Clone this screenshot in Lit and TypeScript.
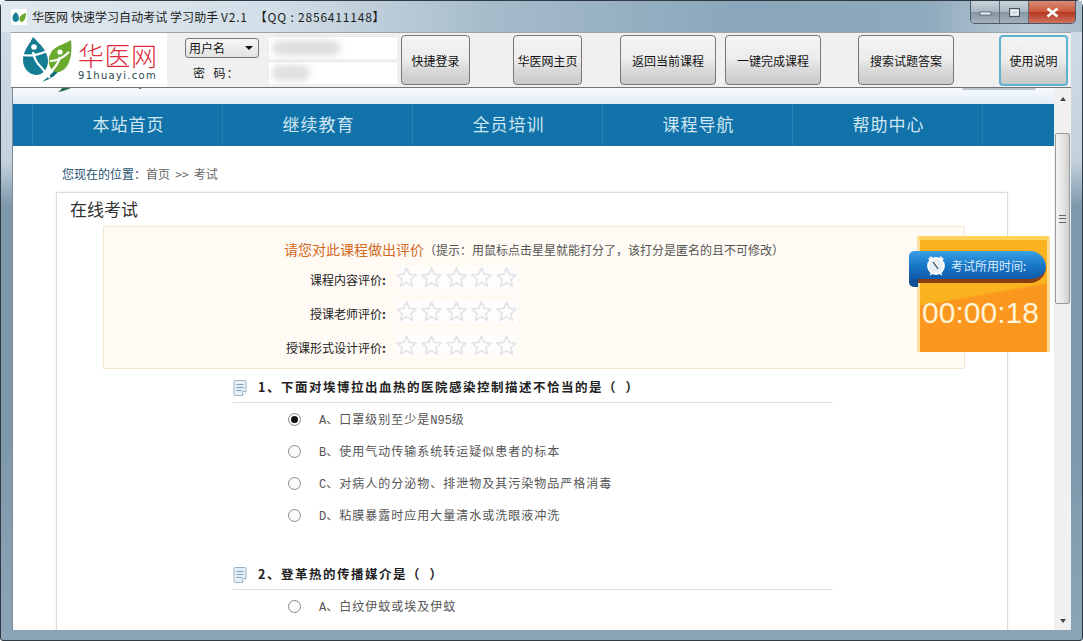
import { LitElement, html, css, svg } from "lit";
import { customElement } from "lit/decorators.js";

const star = svg`<svg class="star" viewBox="0 0 24 24" width="23" height="23"><path d="M12 2.200l2.900 6.600 7 .7-5.300 4.700 1.600 7-6.200-3.700-6.200 3.700 1.600-7L2.100 9.500l7-.7z" fill="#fdfdfd" stroke="#e2e4e7" stroke-width="1.800" stroke-linejoin="round"/></svg>`;
const docIcon = svg`<svg class="doc" viewBox="0 0 14 16" width="14" height="16"><path d="M1 1.500Q1 .5 2 .5h10q1 0 1 1v10l-3.500 4H2q-1 0-1-1z" fill="#e6eff6" stroke="#9db6ca"/><path d="M3.500 4.500h7M3.500 7.500h7M3.500 10.500h5" stroke="#7f9fb8"/><path d="M9.500 15.500v-4h3.500" fill="#fff" stroke="#9db6ca"/></svg>`;

const questions = [
  { title: "1、下面对埃博拉出血热的医院感染控制描述不恰当的是（  ）", opts: [
    ["A", "口罩级别至少是", "N95", "级", true], ["B", "使用气动传输系统转运疑似患者的标本", "", "", false],
    ["C", "对病人的分泌物、排泄物及其污染物品严格消毒", "", "", false], ["D", "粘膜暴露时应用大量清水或洗眼液冲洗", "", "", false] ] },
  { title: "2、登革热的传播媒介是（  ）", opts: [["A", "白纹伊蚊或埃及伊蚊", "", "", false]] },
];

@customElement("app-root")
export class AppRoot extends LitElement {
  static styles = css`
    :host { display: block; width: 1083px; height: 641px; overflow: hidden; background: #fff;
      font-family: "Noto Sans CJK SC", "Liberation Sans", sans-serif; color: #222; }
    .window { box-sizing: border-box; width: 1083px; height: 641px; display: flex; flex-direction: column;
      padding: 0 11px 10px 11px; border: 1px solid #2f3a42; border-radius: 7px 7px 3px 3px; margin: 0;
      background: linear-gradient(180deg, #d3dee7 0, #c3d2dd 25%, #7f99ac 32%, #7f99ac 70%, #8ba4b6 100%);
      position: relative; }
    .titlebar { height: 31px; flex: none; display: flex; align-items: center; margin: 0 -11px 0 -11px; padding-left: 10px;
      background: linear-gradient(90deg, #dfe8ef 0, #d3dfe8 25%, #a6bccb 45%, #8aa7bb 68%, #8da9bc 85%, #b9c9d5 95%, #aabdcb 100%); }
    .appicon { margin-right: 5px; flex: none; }
    .apptitle { font-size: 12px; color: #1c1c1c; white-space: pre; flex: 1; letter-spacing: .05px; }
    .apptitle span { letter-spacing: .8px; }
    .controls { align-self: flex-start; display: flex; height: 22px; margin-right: 6px; border: 1px solid #4a5a66; border-top: 0; border-radius: 0 0 5px 5px; overflow: hidden; }
    .ctl { display: flex; align-items: center; justify-content: center; height: 100%; width: 28px;
      background: linear-gradient(180deg, #c9d3da 0, #a8b6c1 50%, #8495a2 51%, #a5b2bc 100%); border-right: 1px solid #5f6e79; }
    .ctl.close { width: 46px; border-right: 0; background: linear-gradient(180deg, #d98a74 0, #c9573c 50%, #b5371f 51%, #cf7360 100%); color: #fff; }
    .toolbar { height: 56px; flex: none; box-sizing: border-box; display: flex; align-items: center; background: #f0f0f0; margin-left: -1px;
      border-bottom: 1px solid #6f7479; border-top: 1px solid #9aa7b0; }
    .logo { width: 156px; height: 100%; flex: none; background: #fff; display: flex; align-items: center; padding-left: 11px; box-sizing: border-box; }
    .logo svg { flex: none; }
    .brand { display: flex; flex-direction: column; align-items: flex-start; margin-left: 0; margin-top: 2px; }
    .brandcn { font-size: 26px; line-height: 30px; color: #dc2a3a; letter-spacing: .5px; font-weight: 300; }
    .branden { font-family: "DejaVu Sans", sans-serif; font-size: 10px; line-height: 12px; letter-spacing: 1.300px; color: #2a4a50; white-space: nowrap; }
    .login { margin-left: 18px; width: 77px; flex: none; display: flex; flex-direction: column; gap: 3px; font-size: 12px; }
    .select { box-sizing: border-box; width: 74px; height: 20px; border: 1px solid #777; border-radius: 3px; display: flex; align-items: center; justify-content: space-between;
      padding: 0 5px 0 3px; background: linear-gradient(180deg, #f7f7f7, #e2e2e2); color: #111; }
    .caret { width: 0; height: 0; border: 4px solid transparent; border-top: 4px solid #111; border-bottom: 0; }
    .pwlabel { padding: 2px 0 0 8px; letter-spacing: 1px; white-space: pre; height: 20px; line-height: 20px; }
    .inputs { margin-left: 7px; width: 128px; flex: none; display: flex; flex-direction: column; gap: 2px; }
    .input { height: 23px; background: #fff; display: flex; align-items: center; padding-left: 3px; border-top: 1px solid #e8e8e8; box-sizing: border-box; }
    .blur { height: 16px; border-radius: 8px; background: #e0e0e0; filter: blur(3px); }
    .btn { box-sizing: border-box; flex: none; height: 50px; display: flex; align-items: center; justify-content: center; font-size: 12px; color: #111;
      border: 1px solid #777; border-radius: 4px; background: linear-gradient(180deg, #f4f4f4 0, #ececec 48%, #dadada 70%, #c9c9c9 100%); white-space: nowrap; }
    .btn.active { border: 2px solid #5fb3cf; height: 51px; }
    .pane { flex: 1; min-height: 0; display: flex; border-left: 1px solid #7b8a96; background: #fff; }
    .page { flex: 1; min-width: 0; overflow: hidden; position: relative; background: #fff; }
    .strip { height: 16px; overflow: hidden; background: linear-gradient(180deg, #f7fafd, #e2ecf6); position: relative; }
    .strip svg { position: absolute; left: 44px; top: 0; }
    .strip span { position: absolute; left: 85px; top: -12px; font-size: 11px; line-height: 15px; color: #555; font-family: "DejaVu Sans", sans-serif; letter-spacing: 1.100px; }
    .strip i { position: absolute; left: 949px; top: 0; width: 74px; height: 2px; background: #b9c6d2; border-radius: 0 0 3px 3px; }
    .nav { height: 42px; background: #1272aa; display: flex; padding-left: 19px; }
    .nav div { width: 190px; flex: none; box-sizing: border-box; border-left: 1px solid #2a80b3; color: #cfe6f3; font-size: 17px; line-height: 40px; text-align: center; letter-spacing: 1px; text-indent: 2px; }
    .crumb { margin: 19px 0 0 49px; height: 18px; line-height: 18px; font-size: 12px; color: #666; }
    .crumb b { font-weight: 400; color: #23506f; }
    .crumb span { margin: 0 2.500px; }
    .card { margin: 9px 0 0 43px; width: 952px; box-sizing: border-box; height: 460px; border: 1px solid #dcdcdc; border-bottom: 0; box-shadow: 0 0 2px #e8e8e8; }
    .cardtitle { height: 33px; line-height: 32px; padding-left: 13px; font-size: 17px; color: #333; }
    .rate { margin-left: 46px; width: 862px; height: 143px; box-sizing: border-box; background: #fffaf3; border: 1px solid #f3e6d2; padding-top: 12px; }
    .ratehead { height: 22px; line-height: 20px; padding-left: 180px; font-size: 14px; color: #d2691e; white-space: nowrap; }
    .ratehead small { font-size: 12px; color: #555; }
    .raterow { height: 34px; display: flex; align-items: center; }
    .rlabel { width: 285px; padding-top: 2px; text-align: right; font-size: 12px; color: #222; white-space: nowrap; }
    .rlabel i { display: inline-block; width: 7px; text-align: left; font-style: normal; font-weight: 700; }
    .stars { display: flex; margin: 0 0 2px 6px; gap: 2px; background: #fffdfb; }
    .star { display: block; }
    .q { margin-left: 176px; width: 600px; }
    .qhead { height: 30px; display: flex; align-items: center; border-bottom: 1px solid #ddd; box-sizing: border-box; margin-top: 4px; padding-bottom: 2px; font-size: 12.500px; font-weight: 700; letter-spacing: 1.500px; color: #222; white-space: pre; }
    .doc { margin: 2px 11px 0 0; flex: none; }
    .opt { height: 32px; display: flex; align-items: center; padding-left: 55px; font-size: 12px; letter-spacing: 1px; color: #555; white-space: pre; }
    .radio { width: 13px; height: 13px; box-sizing: border-box; border: 1px solid #888; border-radius: 50%; margin-right: 18px; background: #fbfbfb; display: flex; align-items: center; justify-content: center; flex: none; }
    .radio i { width: 7px; height: 7px; border-radius: 50%; background: #111; }
    .letter { font-family: "Liberation Mono", monospace; letter-spacing: 0; }
    .q + .q { margin-top: 29px; }
    .scroll { width: 17px; flex: none; background: #f0f0f0; display: flex; flex-direction: column; align-items: center; position: relative; }
    .arrow { height: 18px; flex: none; display: flex; align-items: center; justify-content: center; }
    .up { width: 0; height: 0; border: 3.500px solid transparent; border-bottom: 4px solid #444; border-top: 0; margin-top: 3px; }
    .down { width: 0; height: 0; border: 3.500px solid transparent; border-top: 4px solid #444; border-bottom: 0; }
    .thumb { box-sizing: border-box; margin-top: 27px; width: 15px; height: 171px; border: 1px solid #9a9a9a; border-radius: 2px; background: linear-gradient(90deg, #f3f3f3, #e4e4e4 55%, #cfcfcf); display: flex; align-items: center; justify-content: center; }
    .grip { width: 7px; height: 6px; border-top: 1px solid #666; border-bottom: 1px solid #666; position: relative; }
    .grip::after { content: ""; position: absolute; left: 0; right: 0; top: 2px; height: 1px; background: #666; }
    .spacer { flex: 1; }
    .timer { position: absolute; left: 904px; top: 148px; width: 133px; height: 116px; box-sizing: border-box; overflow: visible; border-radius: 3px 3px 0 0;
      background: linear-gradient(170deg, #fbb21f 0, #fbb21f 48%, #fb971f 50%, #fb971f 100%); border-left: 3px solid #fde0a0; border-right: 3px solid #fdd890; border-top: 4px solid #ffd35a; }
    .ribbon { position: absolute; left: -11px; top: 11px; width: 137px; height: 32px; box-sizing: border-box; border-radius: 6px 18px 18px 4px; display: flex; align-items: center; padding-left: 16px;
      background: linear-gradient(180deg, #3aa0e6 0, #1a78c8 50%, #0e5aa8 100%); border-bottom: 4px solid #8a3e12; color: #d8ecfa; font-size: 12px; white-space: nowrap; }
    .ribbon::before { content: ""; position: absolute; left: 0; bottom: -8px; width: 9px; height: 8px; background: #0e4f96; border-radius: 0 0 0 5px; }
    .clock { margin-right: 4px; flex: none; }
    .time { position: absolute; left: -6px; right: 0; top: 55px; text-align: center; font-family: "Liberation Sans", sans-serif; font-size: 30px; line-height: 36px; color: #fff4d6; }
  `;

  private rateRow(label: string) {
    return html`<div class="raterow"><div class="rlabel">${label}<i>:</i></div><div class="stars">${[0, 1, 2, 3, 4].map(() => star)}</div></div>`;
  }

  render() {
    return html`<div class="window">
      <div class="titlebar">
        <svg class="appicon" viewBox="0 0 16 16" width="16" height="16"><rect width="16" height="16" rx="2" fill="#fff"/><path d="M5 3Q1 6 1.500 9.500 2 13 5 13q3-1 3-4T5 3z" fill="#1d7f96"/><path d="M15 4q-5 1-6.500 5 0 4 2.500 4 4-2 4-9z" fill="#6aa82f"/></svg>
        <div class="apptitle">华医网 快速学习自动考试 学习助手 <span>V2.1  【QQ : 2856411148】</span></div>
        <div class="controls">
          <div class="ctl"><svg width="13" height="8"><rect x="1" y="4" width="11" height="3" fill="#eef2f4" stroke="#4a5a66" stroke-width=".8"/></svg></div>
          <div class="ctl"><svg width="13" height="11"><rect x="1.500" y="1.500" width="10" height="8" fill="#cdd7de" stroke="#45535e"/><rect x="3.500" y="3.500" width="6" height="4" fill="none" stroke="#eef2f4"/></svg></div>
          <div class="ctl close"><svg width="15" height="11"><path d="M2.500 1.500l10 8M12.500 1.500l-10 8" stroke="#fff" stroke-width="2.800"/></svg></div>
        </div>
      </div>
      <div class="toolbar">
        <div class="logo">
          <svg viewBox="0 0 56 48" width="56" height="48">
            <path d="M20 46Q34 42 42 28L38 27Q32 37 20 46z" fill="#0f6f78"/>
            <path d="M11 1C8 8 1 14 1 24 1 33 8 39 15 39 22 38 26 32 26 25 26 15 17 7 11 1z" fill="#147d93"/>
            <path d="M49 4C40 10 28 10 27 24 26 32 32 37 37 36 46 34 51 22 49 4z" fill="#69a92d"/>
            <path d="M1 19Q12 21 25 15M11 16Q13 26 19 31L28 42" stroke="#fff" stroke-width="2.200" fill="none"/>
            <path d="M28 25Q38 25 47 16M38 21Q36 30 25 39" stroke="#fff" stroke-width="2.200" fill="none"/>
            <circle cx="12" cy="11" r="2.800" fill="#fff"/><circle cx="38" cy="16" r="2.600" fill="#fff"/>
          </svg>
          <div class="brand"><div class="brandcn">华医网</div><div class="branden">91huayi.com</div></div>
        </div>
        <div class="login">
          <div class="select"><span>用户名</span><span class="caret"></span></div>
          <div class="pwlabel">密  码：</div>
        </div>
        <div class="inputs">
          <div class="input"><div class="blur" style="width:68px"></div></div>
          <div class="input"><div class="blur" style="width:38px"></div></div>
        </div>
        <div class="btn" style="margin-left:4px;width:69px">快捷登录</div>
        <div class="btn" style="margin-left:43px;width:69px">华医网主页</div>
        <div class="btn" style="margin-left:38px;width:96px">返回当前课程</div>
        <div class="btn" style="margin-left:9px;width:96px">一键完成课程</div>
        <div class="btn" style="margin-left:37px;width:96px">搜索试题答案</div>
        <div class="btn active" style="margin-left:45px;width:69px">使用说明</div>
      </div>
      <div class="pane">
        <div class="page">
          <div class="strip"><svg width="16" height="5"><path d="M1 4Q8 3 14 0H5Q4 2 1 4z" fill="#2f6f4f"/></svg><span>91huayi.com</span><i></i></div>
          <div class="nav">${["本站首页", "继续教育", "全员培训", "课程导航", "帮助中心"].map((n) => html`<div>${n}</div>`)}<div></div></div>
          <div class="crumb"><b>您现在的位置：</b>首页 <span>&gt;&gt;</span> 考试</div>
          <div class="card">
            <div class="cardtitle">在线考试</div>
            <div class="rate">
              <div class="ratehead">请您对此课程做出评价<small>（提示：用鼠标点击星星就能打分了，该打分是匿名的且不可修改）</small></div>
              ${this.rateRow("课程内容评价")}${this.rateRow("授课老师评价")}${this.rateRow("授课形式设计评价")}
            </div>
            ${questions.map((q) => html`<div class="q">
              <div class="qhead">${docIcon}${q.title}</div>
              ${q.opts.map((o) => html`<div class="opt"><span class="radio">${o[4] ? html`<i></i>` : ""}</span><span><span class="letter">${o[0]}</span>、${o[1]}<span class="letter">${o[2]}</span>${o[3]}</span></div>`)}
            </div>`)}
          </div>
          <div class="timer">
            <div class="ribbon">
              <svg class="clock" viewBox="0 0 22 22" width="22" height="22"><path d="M3 5l3-3 2 2-3 3zM19 5l-3-3-2 2 3 3z" fill="#dfe8f0"/><circle cx="11" cy="12" r="8" fill="#e8eef4" stroke="#fff" stroke-width="1.800"/><path d="M11 12l-3-4M11 12l2 3" stroke="#345" stroke-width="1.200"/><path d="M5 21l2-2M17 21l-2-2" stroke="#fff" stroke-width="1.500"/></svg>
              考试所用时间:
            </div>
            <div class="time">00:00:18</div>
          </div>
        </div>
        <div class="scroll">
          <div class="arrow"><span class="up"></span></div>
          <div class="thumb"><span class="grip"></span></div>
          <div class="spacer"></div>
          <div class="arrow"><span class="down"></span></div>
        </div>
      </div>
    </div>`;
  }
}
